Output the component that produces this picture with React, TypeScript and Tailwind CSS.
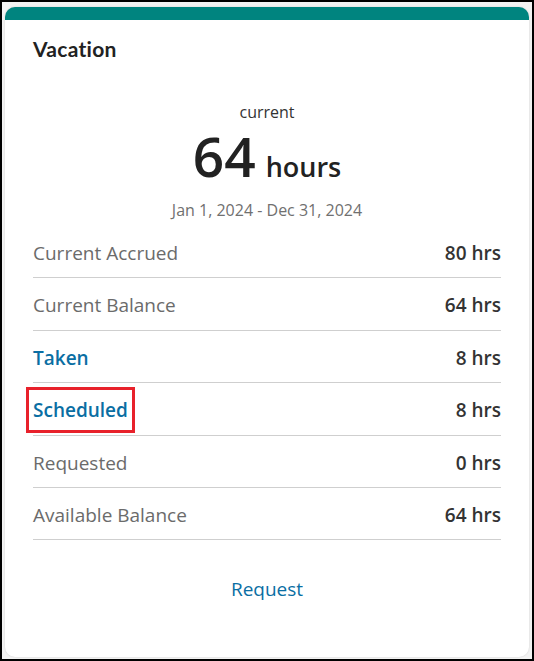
import React from 'react'

const rows = [
  { label: 'Current Accrued', value: '80 hrs' },
  { label: 'Current Balance', value: '64 hrs' },
  { label: 'Taken', value: '8 hrs', link: true },
  { label: 'Scheduled', value: '8 hrs', link: true, marked: true },
  { label: 'Requested', value: '0 hrs' },
  { label: 'Available Balance', value: '64 hrs' },
]

export default function App() {
  return (
    <div className="w-[534px] h-[661px] border-2 border-black bg-[#f3f3f3] p-[3px] pt-[5px] font-['Open_Sans',sans-serif]">
      <div className="h-[650px] rounded-[10px] bg-white border-t-[13px] border-[#00847f] shadow-[0_0_2px_rgba(0,0,0,0.15)] flex flex-col px-[28px]">
        <div className="pt-[16px] font-['Lato',sans-serif] font-bold text-[21px] tracking-[0.3px] text-[#222] leading-[26px]">Vacation</div>
        <div className="mt-[39px] flex flex-col items-center text-[#333]">
          <div className="text-[16px] leading-[22px]">current</div>
          <div className="flex items-baseline gap-[10px] mt-[2px] leading-[62px]">
            <span className="text-[55px] font-semibold text-[#222]">64</span>
            <span className="text-[27px] font-semibold text-[#222]">hours</span>
          </div>
          <div className="text-[16px] leading-[22px] text-[#707070] mt-[1px]">Jan 1, 2024 - Dec 31, 2024</div>
        </div>
        <div className="mt-[5px]">
          {rows.map((r) => (
            <div key={r.label} className="h-[52.4px] pt-[3px] flex items-center justify-between border-b border-[#cfcfcf] text-[19px]">
              {r.marked ? (
                <span className="relative font-semibold text-[#0a6ea3]">
                  {r.label}
                  <span className="absolute left-[-7px] right-[-7px] top-[-9px] bottom-[-8px] border-[3px] border-[#e8212b]" />
                </span>
              ) : (
                <span className={r.link ? 'font-semibold text-[#0a6ea3]' : 'text-[#6b6b6b]'}>{r.label}</span>
              )}
              <span className="font-semibold text-[#333]">{r.value}</span>
            </div>
          ))}
        </div>
        <div className="mt-[35px] text-center text-[19px] text-[#0a6ea3]">Request</div>
      </div>
    </div>
  )
}
